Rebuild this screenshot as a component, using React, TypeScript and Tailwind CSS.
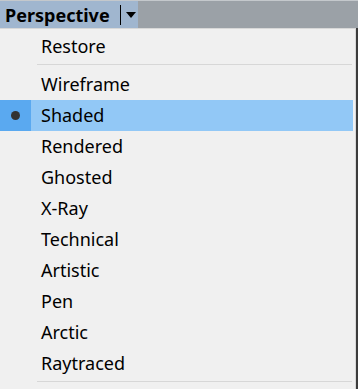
import React from 'react';

const items = ['Wireframe', 'Shaded', 'Rendered', 'Ghosted', 'X-Ray', 'Technical', 'Artistic', 'Pen', 'Arctic', 'Raytraced'];

const App: React.FC = () => {
  const font = { fontFamily: '"Noto Sans", "Open Sans", sans-serif' };
  return (
    <div className="w-[358px] h-[389px] overflow-hidden bg-[#9ba1a7] flex flex-col" style={font}>
      {/* Header tab */}
      <div className="h-[28px] flex shrink-0 border-t border-[#c4c8cc]">
        <div className="w-[138px] bg-[#a0b6cf] flex items-center">
          <span className="pl-[5px] text-[18px] font-bold text-black leading-none">Perspective</span>
          <div className="ml-[10px] w-px h-[20px] bg-black" />
          <svg width="10" height="6" viewBox="0 0 10 6" className="ml-[5px]">
            <path d="M0 0 L10 0 L5 6 Z" fill="#000" />
          </svg>
        </div>
        <div className="flex-1" />
      </div>

      {/* Menu */}
      <div className="flex-1 flex">
        <div className="w-[356px] bg-[#f0f0f0] border-t border-r border-[#d8d8d8] pt-[2px]">
          <div className="h-[31px] flex items-center pl-[41px] text-[18px] text-black">Restore</div>
          <div className="ml-[37px] mr-[3px] h-px bg-[#d7d7d7] my-[2px]" />
          <div className="pt-[2px]">
            {items.map((name) => {
              const selected = name === 'Shaded';
              return (
                <div
                  key={name}
                  className={`h-[31px] flex items-center text-[18px] text-black mr-[2px] ${selected ? 'bg-[#92c8f6]' : ''}`}
                >
                  <div className={`w-[31px] h-full flex items-center justify-center ${selected ? 'bg-[#5aa9f0]' : ''}`}>
                    {selected && <div className="w-[9px] h-[9px] rounded-full bg-[#333]" />}
                  </div>
                  <span className="pl-[10px]">{name}</span>
                </div>
              );
            })}
          </div>
          <div className="ml-[37px] mr-[3px] h-px bg-[#d7d7d7] mt-[2px]" />
        </div>
        <div className="w-[2px] bg-[#3c3c3c]" />
      </div>
    </div>
  );
};

export default App;
